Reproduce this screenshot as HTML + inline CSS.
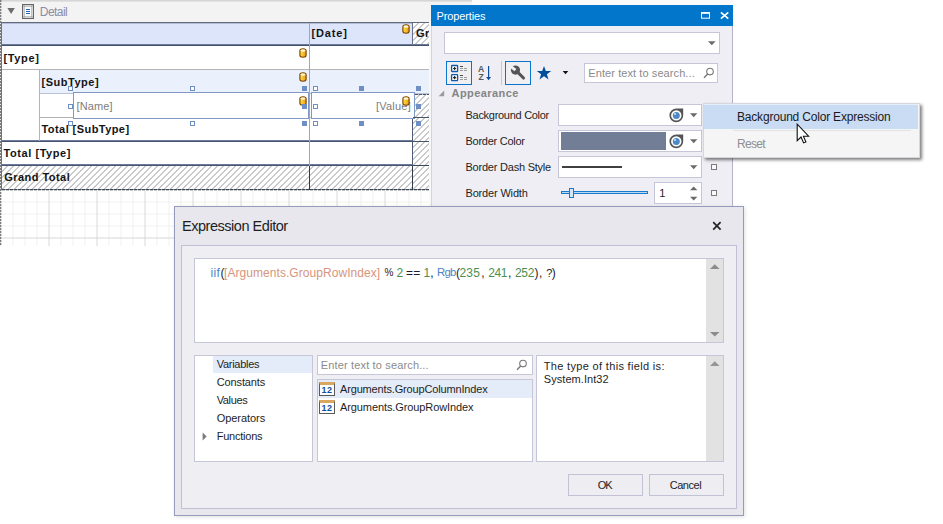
<!DOCTYPE html>
<html lang="en"><head><meta charset="utf-8"><title>Expression Editor</title>
<style>
*{box-sizing:border-box;margin:0;padding:0}
html,body{width:943px;height:524px;overflow:hidden;background:#fff}
body{position:relative;font-family:"Liberation Sans",sans-serif;font-size:11px;color:#1e1e1e}
.a{position:absolute}
.t{position:absolute;white-space:pre;font-family:"Liberation Sans",sans-serif}
.hatch{background-color:#fff;background-image:repeating-linear-gradient(135deg,#fff 0,#fff 3.24px,#cacaca 3.24px,#cacaca 4.243px)}
.hf{background:#6e8fc3}
.hh{background:#fff;border:1px solid #6e8fc3}
.box{background:#fff;border:1px solid #c6c6d9}
</style></head>
<body>
<svg width="0" height="0" style="position:absolute"><defs><linearGradient id="dbg" x1="0" y1="0" x2="1" y2="0"><stop offset="0" stop-color="#ffe352"/><stop offset=".55" stop-color="#f7bd22"/><stop offset="1" stop-color="#ee9d0c"/></linearGradient></defs></svg>
<div class="a" style="left:0;top:0;width:429px;height:246px;background:#fff;overflow:hidden">
<svg class="a" style="left:0;top:0" width="429" height="246"><defs>
<pattern id="g1" x="1.5" y="190.5" width="12" height="12" patternUnits="userSpaceOnUse"><path d="M12 0V12M0 12H12" stroke="#e3e3e3" stroke-width="1" fill="none"/></pattern>
<pattern id="g2" x="1.5" y="190.5" width="48" height="48" patternUnits="userSpaceOnUse"><path d="M48 0V48M0 48H48" stroke="#d5d5d5" stroke-width="1.3" fill="none"/></pattern>
</defs><rect x="2" y="190" width="427" height="56" fill="url(#g1)"/><rect x="2" y="190" width="427" height="56" fill="url(#g2)"/></svg>
<div class="a" style="left:0px;top:0px;width:429px;height:22px;background:#f3f3f3;"></div>
<div class="a" style="left:0px;top:0px;width:429px;height:1px;background:#d6d6d6;"></div>
<div class="a" style="left:0px;top:1px;width:429px;height:1px;background:#e1e1e1;"></div>
<div class="a" style="left:0px;top:0px;width:1px;height:246px;background-image:repeating-linear-gradient(180deg,#7c7c7c 0,#7c7c7c 2px,#e6e6e6 2px,#e6e6e6 3px)"></div>
<div class="a" style="left:1px;top:0px;width:1px;height:246px;opacity:.35;background-image:repeating-linear-gradient(180deg,#7c7c7c 0,#7c7c7c 2px,#e6e6e6 2px,#e6e6e6 3px)"></div>
<svg class="a" style="left:6.500px;top:8px" width="9" height="7" viewBox="0 0 9 7"><path d="M.4 0H7.800L4.100 6.100Z" fill="#6c6c6c"/></svg>
<svg class="a" style="left:22px;top:4px" width="12" height="15" viewBox="0 0 12 15"><rect x=".6" y=".6" width="10.800" height="13.800" fill="#fafafa" stroke="#666" stroke-width="1.200"/><path d="M2.400 1.200V13.800M9.600 1.200V13.800M1.200 2.400H10.800M1.200 12.600H10.800" stroke="#a4a4a4" stroke-width=".7" fill="none"/><path d="M4 5.500H8M4 7.500H8M4 9.500H8" stroke="#2463c4" stroke-width="1"/></svg>
<span class="t" style="left:39.8px;top:3.9000000000000004px;font-size:12px;line-height:16px;font-weight:400;color:#8b8ba2;letter-spacing:-0.548px;">Detail</span>
<div class="a" style="left:2px;top:23px;width:411px;height:22px;background:#dde5fa;"></div>
<div class="a" style="left:2px;top:46px;width:427px;height:24px;background:#fff;"></div>
<div class="a" style="left:39px;top:70px;width:390px;height:24px;background:#ebf1fc;"></div>
<div class="a" style="left:2px;top:70px;width:37px;height:71px;background:#fff;"></div>
<div class="a" style="left:39px;top:94px;width:374px;height:47px;background:#fff;"></div>
<div class="a" style="left:2px;top:142px;width:411px;height:23px;background:#fff;"></div>
<div class="a hatch" style="left:413px;top:23px;width:16px;height:22px;"></div>
<div class="a hatch" style="left:413px;top:94px;width:16px;height:96px;"></div>
<div class="a hatch" style="left:2px;top:166px;width:411px;height:24px;"></div>
<div class="a" style="left:2px;top:22px;width:427px;height:1px;background:#626b7c;"></div>
<div class="a" style="left:2px;top:23px;width:411px;height:1px;background:#b3bdd6;"></div>
<div class="a" style="left:2px;top:44px;width:427px;height:1px;background:#6b7a98;"></div>
<div class="a" style="left:2px;top:45px;width:427px;height:1px;background:#44516a;"></div>
<div class="a" style="left:2px;top:69px;width:427px;height:1px;background:#b4b4b4;"></div>
<div class="a" style="left:39px;top:93px;width:390px;height:1px;background:#b9c3d6;"></div>
<div class="a" style="left:39px;top:117px;width:390px;height:1px;background:#b4b4b4;"></div>
<div class="a" style="left:2px;top:140px;width:411px;height:1px;background:#6c7b99;"></div>
<div class="a" style="left:2px;top:141px;width:411px;height:1px;background:#485470;"></div>
<div class="a" style="left:413px;top:141px;width:16px;height:1px;background:#4a5565;"></div>
<div class="a" style="left:2px;top:164px;width:411px;height:1px;background:#6c7b99;"></div>
<div class="a" style="left:2px;top:165px;width:411px;height:1px;background:#485470;"></div>
<div class="a" style="left:413px;top:165px;width:16px;height:1px;background:#3a4556;"></div>
<div class="a" style="left:2px;top:189px;width:427px;height:1px;background-image:repeating-linear-gradient(90deg,#3c4656 0,#3c4656 3px,#8a919c 3px,#8a919c 4px)"></div>
<div class="a" style="left:2px;top:190px;width:427px;height:1px;background-image:repeating-linear-gradient(90deg,#c8c8c8 0,#c8c8c8 3px,#fff 3px,#fff 4px)"></div>
<div class="a" style="left:309px;top:23px;width:1px;height:143px;background:#a6a6a6;"></div>
<div class="a" style="left:309px;top:166px;width:1px;height:24px;background:#2f3a4c;"></div>
<div class="a" style="left:412px;top:23px;width:1px;height:21px;background:#66718a;"></div>
<div class="a" style="left:412px;top:94px;width:1px;height:72px;background:#4f5b74;"></div>
<div class="a" style="left:412px;top:166px;width:1px;height:24px;background:#2f3a4c;"></div>
<div class="a" style="left:39px;top:70px;width:1px;height:71px;background:#b4b4b4;"></div>
<div class="a" style="left:1px;top:22px;width:1px;height:168px;background:#6c7383;"></div>
<div class="a" style="left:73px;top:92px;width:236px;height:27px;border:1px solid #7f98c4;background:#fff"></div>
<div class="a" style="left:311px;top:92px;width:104px;height:27px;border:1px solid #7f98c4;background:#fff"></div>
<div class="a hatch" style="left:415px;top:94px;width:14px;height:23px;"></div>
<div class="a" style="left:415px;top:94px;width:14px;height:1px;background-image:repeating-linear-gradient(90deg,#4a5565 0,#4a5565 3px,#c9ccd2 3px,#c9ccd2 4px)"></div>
<div class="a" style="left:413px;top:117px;width:16px;height:1px;background:#4a5565;"></div>
<span class="t" style="left:3.5px;top:50.5px;font-size:11px;line-height:15px;font-weight:700;color:#141414;letter-spacing:0.635px;">[Type]</span>
<span class="t" style="left:41.5px;top:74.5px;font-size:11px;line-height:15px;font-weight:700;color:#141414;letter-spacing:0.526px;">[SubType]</span>
<span class="t" style="left:76.6px;top:98.5px;font-size:11px;line-height:15px;font-weight:400;color:#7d7d7d;letter-spacing:0.122px;">[Name]</span>
<span class="t" style="left:311.5px;top:25.5px;font-size:11px;line-height:15px;font-weight:700;color:#141414;letter-spacing:0.871px;">[Date]</span>
<span class="t" style="left:376px;top:98.5px;font-size:11px;line-height:15px;font-weight:400;color:#7d7d7d;letter-spacing:0.223px;">[Value]</span>
<span class="t" style="left:416px;top:25.5px;font-size:11px;line-height:15px;font-weight:700;color:#141414;letter-spacing:0.462px;">Grand Total</span>
<span class="t" style="left:41.5px;top:121.5px;font-size:11px;line-height:15px;font-weight:700;color:#141414;letter-spacing:0.434px;">Total [SubType]</span>
<span class="t" style="left:3.5px;top:145.5px;font-size:11px;line-height:15px;font-weight:700;color:#141414;letter-spacing:0.566px;">Total [Type]</span>
<span class="t" style="left:4.2px;top:170.0px;font-size:11px;line-height:15px;font-weight:700;color:#141414;letter-spacing:0.462px;">Grand Total</span>
<svg class="a" style="left:299px;top:48px" width="9" height="10" viewBox="0 0 9 10"><path d="M.9 2.700C.9 .1 7.100 .1 7.100 2.700V7.300C7.100 9.900 .9 9.900 .9 7.300Z" fill="url(#dbg)" stroke="#7a4308" stroke-width="1.150"/><ellipse cx="4" cy="2.600" rx="2.500" ry="1.200" fill="#fff9e2"/></svg>
<svg class="a" style="left:299px;top:72px" width="9" height="10" viewBox="0 0 9 10"><path d="M.9 2.700C.9 .1 7.100 .1 7.100 2.700V7.300C7.100 9.900 .9 9.900 .9 7.300Z" fill="url(#dbg)" stroke="#7a4308" stroke-width="1.150"/><ellipse cx="4" cy="2.600" rx="2.500" ry="1.200" fill="#fff9e2"/></svg>
<svg class="a" style="left:299px;top:96px" width="9" height="10" viewBox="0 0 9 10"><path d="M.9 2.700C.9 .1 7.100 .1 7.100 2.700V7.300C7.100 9.900 .9 9.900 .9 7.300Z" fill="url(#dbg)" stroke="#7a4308" stroke-width="1.150"/><ellipse cx="4" cy="2.600" rx="2.500" ry="1.200" fill="#fff9e2"/></svg>
<svg class="a" style="left:402px;top:24px" width="9" height="10" viewBox="0 0 9 10"><path d="M.9 2.700C.9 .1 7.100 .1 7.100 2.700V7.300C7.100 9.900 .9 9.900 .9 7.300Z" fill="url(#dbg)" stroke="#7a4308" stroke-width="1.150"/><ellipse cx="4" cy="2.600" rx="2.500" ry="1.200" fill="#fff9e2"/></svg>
<svg class="a" style="left:402px;top:96px" width="9" height="10" viewBox="0 0 9 10"><path d="M.9 2.700C.9 .1 7.100 .1 7.100 2.700V7.300C7.100 9.900 .9 9.900 .9 7.300Z" fill="url(#dbg)" stroke="#7a4308" stroke-width="1.150"/><ellipse cx="4" cy="2.600" rx="2.500" ry="1.200" fill="#fff9e2"/></svg>
<div class="a hh" style="left:67.5px;top:86px;width:5px;height:5px;"></div>
<div class="a hh" style="left:190px;top:86px;width:5px;height:5px;"></div>
<div class="a hf" style="left:302px;top:86px;width:5px;height:5px;"></div>
<div class="a hh" style="left:313px;top:86px;width:5px;height:5px;"></div>
<div class="a hf" style="left:359px;top:86px;width:5px;height:5px;"></div>
<div class="a hf" style="left:416px;top:86px;width:5px;height:5px;"></div>
<div class="a hh" style="left:67.5px;top:104px;width:5px;height:5px;"></div>
<div class="a hf" style="left:302px;top:104px;width:5px;height:5px;"></div>
<div class="a hh" style="left:313px;top:104px;width:5px;height:5px;"></div>
<div class="a hf" style="left:416px;top:104px;width:5px;height:5px;"></div>
<div class="a hh" style="left:67.5px;top:121px;width:5px;height:5px;"></div>
<div class="a hh" style="left:190px;top:121px;width:5px;height:5px;"></div>
<div class="a hf" style="left:302px;top:121px;width:5px;height:5px;"></div>
<div class="a hh" style="left:313px;top:121px;width:5px;height:5px;"></div>
<div class="a hf" style="left:359px;top:121px;width:5px;height:5px;"></div>
<div class="a hf" style="left:416px;top:121px;width:5px;height:5px;"></div>
</div>
<div class="a" style="left:429px;top:0px;width:2px;height:246px;background:#f8f8fa;"></div>
<div class="a" style="left:429px;top:0px;width:2px;height:22px;background:#f3f3f3;"></div>
<div class="a" style="left:431px;top:0px;width:302px;height:6px;background:#fbfbfb;"></div>
<div class="a" style="left:431px;top:0px;width:41px;height:6px;background:#f3f3f3;"></div>
<div class="a" style="left:429px;top:0px;width:43px;height:1px;background:#d6d6d6;"></div>
<div class="a" style="left:429px;top:1px;width:43px;height:1px;background:#e1e1e1;"></div>
<div class="a" style="left:431px;top:6px;width:302px;height:240px;background:#eeeef4;border-left:1px solid #d3d3e3;border-right:1px solid #b3b3cc"></div>
<div class="a" style="left:431px;top:5px;width:302px;height:21px;background:#0276cb;"></div>
<span class="t" style="left:436.6px;top:8.5px;font-size:11px;line-height:15px;font-weight:400;color:#fff;letter-spacing:-0.144px;">Properties</span>
<svg class="a" style="left:700px;top:10px" width="32" height="12" viewBox="0 0 32 12"><rect x="1.500" y="2.700" width="8" height="5.500" fill="none" stroke="#fff" stroke-width="1"/><rect x="1" y="2.100" width="9" height="1.700" fill="#fff"/><path d="M20.900 2.400L28.300 8.700M28.300 2.400L20.900 8.700" stroke="#fff" stroke-width="1.600" fill="none"/></svg>
<div class="a box" style="left:444px;top:32px;width:276px;height:22px;"></div>
<svg class="a" style="left:707.700px;top:41px" width="8" height="5" viewBox="0 0 8 5"><path d="M0 .3H7.6L3.8 4.300Z" fill="#6b6b6b"/></svg>
<div class="a" style="left:446px;top:61px;width:26px;height:24px;background:#f0f0f3;border:1px solid #0a74cc"></div>
<svg class="a" style="left:450px;top:64px" width="18" height="18" viewBox="0 0 18 18">
<rect x="1.600" y="1.500" width="6" height="6" rx=".6" fill="#fff" stroke="#1159a9" stroke-width="1.300"/><path d="M3 4.500H6.200M4.600 2.900V6.100" stroke="#2a2a2a" stroke-width="1.200"/>
<rect x="1.600" y="10.700" width="6" height="6" rx=".6" fill="#fff" stroke="#1159a9" stroke-width="1.300"/><path d="M3 13.700H6.200M4.600 12.100V15.300" stroke="#2a2a2a" stroke-width="1.200"/>
<path d="M10 2.500H13" stroke="#4a4a4a" stroke-width="1"/><path d="M10 4.500H13M14 4.500H17M10 6.500H13M14 6.500H17" stroke="#9c9c9c" stroke-width="1"/>
<path d="M10 11.500H13" stroke="#4a4a4a" stroke-width="1"/><path d="M10 13.500H13M14 13.500H17M10 15.500H13M14 15.500H17" stroke="#9c9c9c" stroke-width="1"/></svg>
<span class="t" style="left:478.1px;top:63.2px;font-size:8.6px;line-height:12.6px;font-weight:700;color:#575757;letter-spacing:0px;">A</span>
<span class="t" style="left:478.4px;top:71.0px;font-size:8.6px;line-height:12.6px;font-weight:700;color:#575757;letter-spacing:0px;">Z</span>
<svg class="a" style="left:485px;top:65px" width="8" height="16" viewBox="0 0 8 16"><path d="M3.600 1V13" stroke="#0c4f9e" stroke-width="1.200"/><path d="M1.100 12H6.100L3.600 15.200Z" fill="#0c4f9e"/></svg>
<div class="a" style="left:501px;top:61px;width:1px;height:24px;background:#c6c6dc;"></div>
<div class="a" style="left:505px;top:61px;width:26px;height:24px;background:#f0f0f3;border:1px solid #0a74cc"></div>
<svg class="a" style="left:510px;top:65px" width="16" height="16" viewBox="0 0 16 16"><circle cx="5.500" cy="5.100" r="4.600" fill="#555"/><rect x="-1.500" y="3.700" width="7" height="3" fill="#f0f0f3" transform="rotate(38 5.500 5.100)"/><path d="M7.600 7.200L13.500 13" stroke="#555" stroke-width="3.100" stroke-linecap="round"/></svg>
<svg class="a" style="left:536px;top:65px" width="16" height="15" viewBox="0 0 16 15"><path d="M8 1L9.800 6.100H15.200L10.900 9.300L12.500 14.500L8 11.300L3.500 14.500L5.100 9.300L.8 6.100H6.200Z" fill="#024c9c"/></svg>
<svg class="a" style="left:562px;top:70px" width="7" height="5" viewBox="0 0 7 5"><path d="M.7 .9H6.300L3.500 4.300Z" fill="#111"/></svg>
<div class="a box" style="left:584px;top:63px;width:134px;height:20px;"></div>
<span class="t" style="left:588.3px;top:65.5px;font-size:11px;line-height:15px;font-weight:400;color:#8b8b8b;letter-spacing:0.084px;">Enter text to search...</span>
<svg class="a" style="left:703px;top:67px" width="12" height="12" viewBox="0 0 12 12"><circle cx="7" cy="4.600" r="3.300" fill="none" stroke="#777" stroke-width="1.100"/><path d="M4.700 7L1 10.800" stroke="#777" stroke-width="1.400"/></svg>
<svg class="a" style="left:437.700px;top:89.600px" width="7" height="7" viewBox="0 0 7 7"><path d="M6.200 .6V6.200H.6Z" fill="#9a9a9a"/></svg>
<span class="t" style="left:451.5px;top:85.5px;font-size:11px;line-height:15px;font-weight:700;color:#858585;letter-spacing:0.432px;">Appearance</span>
<span class="t" style="left:465.5px;top:107.5px;font-size:11px;line-height:15px;font-weight:400;color:#1e1e1e;letter-spacing:-0.285px;">Background Color</span>
<span class="t" style="left:465.5px;top:133.5px;font-size:11px;line-height:15px;font-weight:400;color:#1e1e1e;letter-spacing:-0.263px;">Border Color</span>
<span class="t" style="left:465.5px;top:159.5px;font-size:11px;line-height:15px;font-weight:400;color:#1e1e1e;letter-spacing:-0.222px;">Border Dash Style</span>
<span class="t" style="left:465.5px;top:185.5px;font-size:11px;line-height:15px;font-weight:400;color:#1e1e1e;letter-spacing:-0.167px;">Border Width</span>
<div class="a box" style="left:558px;top:104px;width:144px;height:22px;"></div>
<svg class="a" style="left:668.7px;top:107.7px" width="15" height="15" viewBox="0 0 15 15"><path d="M7.300 .5H14.200V7.500A6.900 6.900 0 1 1 7.300 .5Z" fill="#545454"/><circle cx="7.300" cy="7.400" r="5.200" fill="#fff"/><circle cx="7.300" cy="7.400" r="3.500" fill="#4e89c5"/><circle cx="6" cy="6.100" r="1" fill="#cfe6fb"/></svg>
<svg class="a" style="left:690px;top:113px" width="8" height="5" viewBox="0 0 8 5"><path d="M0 .3H7.400L3.700 4.200Z" fill="#6b6b6b"/></svg>
<div class="a box" style="left:558px;top:130px;width:144px;height:22px;"></div>
<div class="a" style="left:561px;top:132px;width:105px;height:18px;background:#717e96;"></div>
<svg class="a" style="left:668.7px;top:133.7px" width="15" height="15" viewBox="0 0 15 15"><path d="M7.300 .5H14.200V7.500A6.900 6.900 0 1 1 7.300 .5Z" fill="#545454"/><circle cx="7.300" cy="7.400" r="5.200" fill="#fff"/><circle cx="7.300" cy="7.400" r="3.500" fill="#4e89c5"/><circle cx="6" cy="6.100" r="1" fill="#cfe6fb"/></svg>
<svg class="a" style="left:690px;top:139px" width="8" height="5" viewBox="0 0 8 5"><path d="M0 .3H7.400L3.700 4.200Z" fill="#6b6b6b"/></svg>
<div class="a box" style="left:558px;top:156px;width:144px;height:22px;"></div>
<div class="a" style="left:562px;top:166px;width:60px;height:2px;background:#3f3f3f;"></div>
<svg class="a" style="left:690px;top:165px" width="8" height="5" viewBox="0 0 8 5"><path d="M0 .3H7.400L3.700 4.200Z" fill="#6b6b6b"/></svg>
<div class="a" style="left:711px;top:164px;width:6px;height:6px;background:#fafafa;border:1px solid #7a7a7a"></div>
<div class="a" style="left:711px;top:190px;width:6px;height:6px;background:#fafafa;border:1px solid #7a7a7a"></div>
<div class="a" style="left:561px;top:190.7px;width:87px;height:3.6px;background:#bcdaf4;border:1px solid #1979ca"></div>
<div class="a" style="left:569px;top:188px;width:5px;height:10px;background:#d5e6f7;border:1px solid #1979ca"></div>
<div class="a box" style="left:654px;top:182px;width:48px;height:22px;"></div>
<span class="t" style="left:659.3px;top:185.5px;font-size:11px;line-height:15px;font-weight:400;color:#1e1e1e;letter-spacing:0px;">1</span>
<svg class="a" style="left:690px;top:186px" width="8" height="15" viewBox="0 0 8 15"><path d="M0 4.200H7.400L3.700 .4Z" fill="#6b6b6b"/><path d="M0 10.700H7.400L3.700 14.500Z" fill="#6b6b6b"/></svg>
<div class="a" style="left:703px;top:103px;width:217px;height:55px;background:#f5f5f5;border:1px solid #d6d6dc;box-shadow:2px 2px 3px rgba(0,0,0,.5)"></div>
<div class="a" style="left:704px;top:104px;width:214px;height:25px;background:#c9dcf4;border-top:1px solid #e6eefa"></div>
<div class="a" style="left:733px;top:130px;width:178px;height:1px;background:#e2e2e2;"></div>
<span class="t" style="left:737px;top:108.6px;font-size:12px;line-height:16px;font-weight:400;color:#1a1a1a;letter-spacing:-0.194px;">Background Color Expression</span>
<span class="t" style="left:737px;top:136.2px;font-size:12px;line-height:16px;font-weight:400;color:#8f8f8f;letter-spacing:-0.672px;">Reset</span>
<div class="a" style="left:174px;top:206px;width:570px;height:310px;background:#e7e7ed;border:1px solid #959bbb;box-shadow:1px 1px 4px rgba(0,0,0,.13)"></div>
<span class="t" style="left:182px;top:216.75px;font-size:14.5px;line-height:18.5px;font-weight:400;color:#1e1e1e;letter-spacing:-0.467px;">Expression Editor</span>
<svg class="a" style="left:712px;top:221px" width="10" height="10" viewBox="0 0 10 10"><path d="M1.200 1.200L8.600 8.600M8.600 1.200L1.200 8.600" stroke="#222" stroke-width="1.700" fill="none"/></svg>
<div class="a" style="left:181px;top:245px;width:556px;height:264px;background:#eeeef3;border:1px solid #bfbfd5"></div>
<div class="a box" style="left:194px;top:258px;width:530px;height:85px;"></div>
<div class="a" style="left:706px;top:259px;width:17px;height:83px;background:#e2e2e2;"></div>
<svg class="a" style="left:709.800px;top:264px" width="10" height="73" viewBox="0 0 10 73"><path d="M0 5H9.600L4.800 .3Z" fill="#8c8c8c"/><path d="M0 67.900H9.600L4.800 72.600Z" fill="#8c8c8c"/></svg>
<span class="t" style="left:210.5px;top:265.0px;font-size:12px;line-height:16px;font-weight:400;color:#4a86c9;letter-spacing:0.276px;">iif</span>
<span class="t" style="left:220.4px;top:265.0px;font-size:12px;line-height:16px;font-weight:400;color:#1b1b2b;letter-spacing:-1.0px;">(</span>
<span class="t" style="left:224px;top:265.0px;font-size:12px;line-height:16px;font-weight:400;color:#d7957c;letter-spacing:0.058px;">[Arguments.GroupRowIndex]</span>
<span class="t" style="left:384.4px;top:266.0px;font-size:10px;line-height:14px;font-weight:400;color:#1b1b2b;letter-spacing:-0.406px;">%</span>
<span class="t" style="left:396.5px;top:265.0px;font-size:12px;line-height:16px;font-weight:400;color:#4e8f4e;letter-spacing:-0.688px;">2</span>
<span class="t" style="left:406.1px;top:265.0px;font-size:12px;line-height:16px;font-weight:400;color:#1b1b2b;letter-spacing:0.142px;">==</span>
<span class="t" style="left:423.4px;top:265.0px;font-size:12px;line-height:16px;font-weight:400;color:#4e8f4e;letter-spacing:-1.487px;">1</span>
<span class="t" style="left:430.2px;top:265.0px;font-size:12px;line-height:16px;font-weight:400;color:#1b1b2b;letter-spacing:0px;">,</span>
<span class="t" style="left:437px;top:265.35px;font-size:11.3px;line-height:15.3px;font-weight:400;color:#4a86c9;letter-spacing:-0.711px;">Rgb</span>
<span class="t" style="left:456px;top:265.0px;font-size:12px;line-height:16px;font-weight:400;color:#1b1b2b;letter-spacing:-1.0px;">(</span>
<span class="t" style="left:459.5px;top:265.0px;font-size:12px;line-height:16px;font-weight:400;color:#4e8f4e;letter-spacing:0.156px;">235</span>
<span class="t" style="left:481.2px;top:265.0px;font-size:12px;line-height:16px;font-weight:400;color:#1b1b2b;letter-spacing:0px;">,</span>
<span class="t" style="left:488.3px;top:265.0px;font-size:12px;line-height:16px;font-weight:400;color:#4e8f4e;letter-spacing:-0.477px;">241</span>
<span class="t" style="left:508px;top:265.0px;font-size:12px;line-height:16px;font-weight:400;color:#1b1b2b;letter-spacing:0px;">,</span>
<span class="t" style="left:515px;top:265.0px;font-size:12px;line-height:16px;font-weight:400;color:#4e8f4e;letter-spacing:-0.31px;">252</span>
<span class="t" style="left:534.6px;top:265.0px;font-size:12px;line-height:16px;font-weight:400;color:#1b1b2b;letter-spacing:-1.0px;">)</span>
<span class="t" style="left:539px;top:265.0px;font-size:12px;line-height:16px;font-weight:400;color:#1b1b2b;letter-spacing:0px;">,</span>
<span class="t" style="left:546.2px;top:265.5px;font-size:11px;line-height:15px;font-weight:400;color:#1b1b2b;letter-spacing:-1.425px;">?</span>
<span class="t" style="left:551.8px;top:265.0px;font-size:12px;line-height:16px;font-weight:400;color:#1b1b2b;letter-spacing:-1.0px;">)</span>
<div class="a box" style="left:194px;top:355px;width:119px;height:107px;"></div>
<div class="a" style="left:213px;top:356px;width:99px;height:17px;background:#e4ecf9;"></div>
<span class="t" style="left:216.7px;top:356.8px;font-size:11px;line-height:15px;font-weight:400;color:#1e1e1e;letter-spacing:-0.283px;">Variables</span>
<span class="t" style="left:216.7px;top:374.8px;font-size:11px;line-height:15px;font-weight:400;color:#1e1e1e;letter-spacing:-0.115px;">Constants</span>
<span class="t" style="left:216.7px;top:392.8px;font-size:11px;line-height:15px;font-weight:400;color:#1e1e1e;letter-spacing:-0.371px;">Values</span>
<span class="t" style="left:216.7px;top:410.8px;font-size:11px;line-height:15px;font-weight:400;color:#1e1e1e;letter-spacing:-0.047px;">Operators</span>
<span class="t" style="left:216.7px;top:428.8px;font-size:11px;line-height:15px;font-weight:400;color:#1e1e1e;letter-spacing:-0.223px;">Functions</span>
<svg class="a" style="left:202px;top:432px" width="5" height="9" viewBox="0 0 5 9"><path d="M.6 .6L4.600 4.500L.6 8.400Z" fill="#7a7a7a"/></svg>
<div class="a box" style="left:317px;top:355px;width:216px;height:20px;"></div>
<span class="t" style="left:320.8px;top:357.5px;font-size:11px;line-height:15px;font-weight:400;color:#8b8b8b;letter-spacing:0.149px;">Enter text to search...</span>
<svg class="a" style="left:516px;top:359px" width="12" height="12" viewBox="0 0 12 12"><circle cx="7" cy="4.600" r="3.300" fill="none" stroke="#777" stroke-width="1.100"/><path d="M4.700 7L1 10.800" stroke="#777" stroke-width="1.400"/></svg>
<div class="a box" style="left:317px;top:379px;width:216px;height:83px;"></div>
<div class="a" style="left:318px;top:380px;width:214px;height:18px;background:#e4ecf9;"></div>
<div class="a" style="left:319px;top:382px;width:16px;height:14px;background:#fff;border:1px solid #5a5a5a;border-top:3px solid #d9a75f"></div><span class="t" style="left:321.6px;top:383.8px;font-size:9px;line-height:13px;font-weight:700;color:#114f9f;letter-spacing:0.292px;">12</span>
<div class="a" style="left:319px;top:400px;width:16px;height:14px;background:#fff;border:1px solid #5a5a5a;border-top:3px solid #d9a75f"></div><span class="t" style="left:321.6px;top:401.8px;font-size:9px;line-height:13px;font-weight:700;color:#114f9f;letter-spacing:0.292px;">12</span>
<span class="t" style="left:340px;top:381.9px;font-size:11px;line-height:15px;font-weight:400;color:#1e1e1e;letter-spacing:-0.159px;">Arguments.GroupColumnIndex</span>
<span class="t" style="left:340px;top:399.7px;font-size:11px;line-height:15px;font-weight:400;color:#1e1e1e;letter-spacing:-0.097px;">Arguments.GroupRowIndex</span>
<div class="a box" style="left:536px;top:355px;width:188px;height:107px;"></div>
<div class="a" style="left:706px;top:356px;width:17px;height:105px;background:#e2e2e2;"></div>
<svg class="a" style="left:709.800px;top:361.400px" width="10" height="6" viewBox="0 0 10 6"><path d="M0 5H9.600L4.800 .3Z" fill="#969696"/></svg>
<span class="t" style="left:543.8px;top:358.8px;font-size:11px;line-height:15px;font-weight:400;color:#1e1e1e;letter-spacing:0.327px;">The type of this field is:</span>
<span class="t" style="left:543.8px;top:372.0px;font-size:11px;line-height:15px;font-weight:400;color:#1e1e1e;letter-spacing:0.05px;">System.Int32</span>
<div class="a" style="left:568px;top:474px;width:75px;height:22px;background:#ededf2;border:1px solid #c2c2d6"></div>
<div class="a" style="left:649px;top:474px;width:75px;height:22px;background:#ededf2;border:1px solid #c2c2d6"></div>
<span class="t" style="left:597.7px;top:477.5px;font-size:11px;line-height:15px;font-weight:400;color:#1e1e1e;letter-spacing:-0.953px;">OK</span>
<span class="t" style="left:669.7px;top:477.5px;font-size:11px;line-height:15px;font-weight:400;color:#1e1e1e;letter-spacing:-0.442px;">Cancel</span>
<svg class="a" style="left:796px;top:123px" width="14" height="21" viewBox="0 0 14 21"><path d="M1.200 1.200V17.600L5 14L7.600 19.900L9.900 18.900L7.400 13.200H12.600Z" fill="#fff" stroke="#111" stroke-width="1.100" stroke-linejoin="miter"/></svg>
</body></html>
